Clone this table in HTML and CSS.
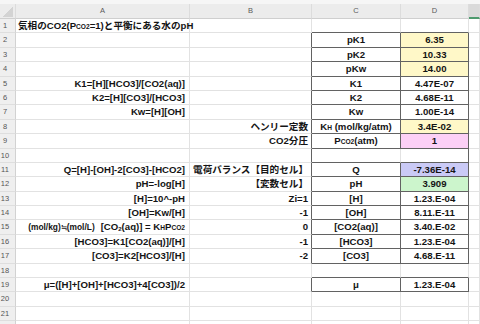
FILE: index.html
```html
<!DOCTYPE html>
<html lang="ja">
<head>
<meta charset="utf-8">
<title>気相のCO2と平衡にある水のpH</title>
<link rel="stylesheet" href="styles.css">
</head>
<body>
<div class="topbar"></div>
<div class="sheet">
  <div class="corner"></div><div class="hd">A</div><div class="hd">B</div><div class="hd">C</div><div class="hd">D</div><div class="hd hd-sel"></div>

  <div class="rn">1</div><div class="a title">気相のCO2(P<span class="sm">CO2</span>=1)と平衡にある水のpH</div><div class="b"></div><div class="c bb"></div><div class="d bb"></div><div class="e"></div>
  <div class="rn">2</div><div class="a"></div><div class="b br"></div><div class="c br bb">pK1</div><div class="d br bb y">6.35</div><div class="e"></div>
  <div class="rn">3</div><div class="a"></div><div class="b br"></div><div class="c br bb">pK2</div><div class="d br bb y">10.33</div><div class="e"></div>
  <div class="rn">4</div><div class="a"></div><div class="b br"></div><div class="c br bb">pKw</div><div class="d br bb y">14.00</div><div class="e"></div>
  <div class="rn">5</div><div class="a">K1=[H][HCO3]/[CO2(aq)]</div><div class="b br"></div><div class="c br bb">K1</div><div class="d br bb">4.47E-07</div><div class="e"></div>
  <div class="rn">6</div><div class="a">K2=[H][CO3]/[HCO3]</div><div class="b br"></div><div class="c br bb">K2</div><div class="d br bb">4.68E-11</div><div class="e"></div>
  <div class="rn">7</div><div class="a">Kw=[H][OH]</div><div class="b br"></div><div class="c br bb">Kw</div><div class="d br bb">1.00E-14</div><div class="e"></div>
  <div class="rn">8</div><div class="a"></div><div class="b br">ヘンリー定数</div><div class="c br bb">K<span class="sm">H</span> (mol/kg/atm)</div><div class="d br bb y">3.4E-02</div><div class="e"></div>
  <div class="rn">9</div><div class="a"></div><div class="b br">CO2分圧</div><div class="c br bb">P<span class="sm">CO2</span>(atm)</div><div class="d br bb p">1</div><div class="e"></div>
  <div class="rn">10</div><div class="a"></div><div class="b br"></div><div class="c bb"></div><div class="d br bb"></div><div class="e"></div>
  <div class="rn">11</div><div class="a">Q=[H]-[OH]-2[CO3]-[HCO2]</div><div class="b br">電荷バランス【目的セル】</div><div class="c br bb">Q</div><div class="d br bb v">-7.36E-14</div><div class="e"></div>
  <div class="rn">12</div><div class="a">pH=-log[H]</div><div class="b br">【変数セル】</div><div class="c br bb">pH</div><div class="d br bb g">3.909</div><div class="e"></div>
  <div class="rn">13</div><div class="a">[H]=10^-pH</div><div class="b br">Zi=1</div><div class="c br bb">[H]</div><div class="d br bb">1.23.E-04</div><div class="e"></div>
  <div class="rn">14</div><div class="a">[OH]=Kw/[H]</div><div class="b br">-1</div><div class="c br bb">[OH]</div><div class="d br bb">8.11.E-11</div><div class="e"></div>
  <div class="rn">15</div><div class="a"><span class="unit">(mol/kg)≒(mol/L)</span>[CO<sub>2</sub>(aq)] = K<span class="sm">H</span>P<span class="sm">CO2</span></div><div class="b br">0</div><div class="c br bb">[CO2(aq)]</div><div class="d br bb">3.40.E-02</div><div class="e"></div>
  <div class="rn">16</div><div class="a">[HCO3]=K1[CO2(aq)]/[H]</div><div class="b br">-1</div><div class="c br bb">[HCO3]</div><div class="d br bb">1.23.E-04</div><div class="e"></div>
  <div class="rn">17</div><div class="a">[CO3]=K2[HCO3]/[H]</div><div class="b br">-2</div><div class="c br bb">[CO3]</div><div class="d br bb">4.68.E-11</div><div class="e"></div>
  <div class="rn">18</div><div class="a"></div><div class="b"></div><div class="c bb"></div><div class="d bb"></div><div class="e"></div>
  <div class="rn">19</div><div class="a">μ=([H]+[OH]+[HCO3]+4[CO3])/2</div><div class="b br"></div><div class="c br bb">μ</div><div class="d br bb">1.23.E-04</div><div class="e"></div>
  <div class="rn">20</div><div class="a"></div><div class="b"></div><div class="c"></div><div class="d"></div><div class="e"></div>
  <div class="rn">21</div><div class="a"></div><div class="b"></div><div class="c"></div><div class="d"></div><div class="e"></div>
  <div class="rn"></div><div class="a"></div><div class="b"></div><div class="c"></div><div class="d"></div><div class="e"></div>
</div>
</body>
</html>
```

FILE: styles.css
```css
* {
  box-sizing: border-box;
  margin: 0;
  padding: 0;
}

html,
body {
  width: 480px;
  height: 324px;
  overflow: hidden;
  background: #ffffff;
}

body {
  font-family: "Liberation Sans", "Noto Sans CJK JP", Arial, sans-serif;
  font-weight: bold;
  font-size: 9.6px;
  color: #141414;
}

.topbar {
  height: 4px;
  background: #f6f6f6;
}

.sheet {
  display: grid;
  grid-template-columns: 16px 174px 122px 89px 68px 11px;
  grid-template-rows: 15px;
  grid-auto-rows: 14.4px;
}

.sheet > div {
  border-right: 1px solid #e2e2e2;
  border-bottom: 1px solid #e2e2e2;
  white-space: nowrap;
  line-height: 13.4px;
  overflow: visible;
}

.corner {
  background-color: #ececec;
  background-image: linear-gradient(to bottom right, transparent 50%, #d3d3d3 50%);
  background-size: 11px 10px;
  background-position: right 2px bottom 1px;
  background-repeat: no-repeat;
}

.sheet > .corner,
.sheet > .hd {
  border-bottom: 1px solid #cfcfcf;
  border-right: 1px solid #dcdcdc;
}

.hd {
  background: #ececec;
  text-align: center;
  font-weight: normal;
  font-size: 7.5px;
  color: #5a5a5a;
  line-height: 14px;
}

.sheet > .hd-sel {
  background: #dadada;
  border-bottom: 2px solid #4e9a6e;
}

.sheet > .rn {
  background: #efefef;
  border-right: 1px solid #d2d2d2;
  border-bottom: 1px solid #dedede;
  text-align: center;
  padding-right: 5px;
  font-weight: normal;
  font-size: 7.5px;
  color: #555555;
}

.a {
  text-align: right;
  padding-right: 4px;
}

.a.title {
  text-align: left;
  padding-left: 2px;
  padding-right: 0;
}

.b {
  text-align: right;
  padding-right: 3px;
}

.c,
.d {
  text-align: center;
}

.sheet > .br {
  border-right: 1px solid #626262;
}

.sheet > .bb {
  border-bottom: 1px solid #626262;
}

.y {
  background: #fff8c8;
}

.p {
  background: #fcd0f6;
}

.v {
  background: #cacaf6;
}

.g {
  background: #ccf5cc;
}

.sm {
  font-size: 6.6px;
}

sub {
  font-size: 6px;
  vertical-align: -1px;
  line-height: 0;
}

.unit {
  font-size: 8.4px;
  margin-right: 6px;
}
```
